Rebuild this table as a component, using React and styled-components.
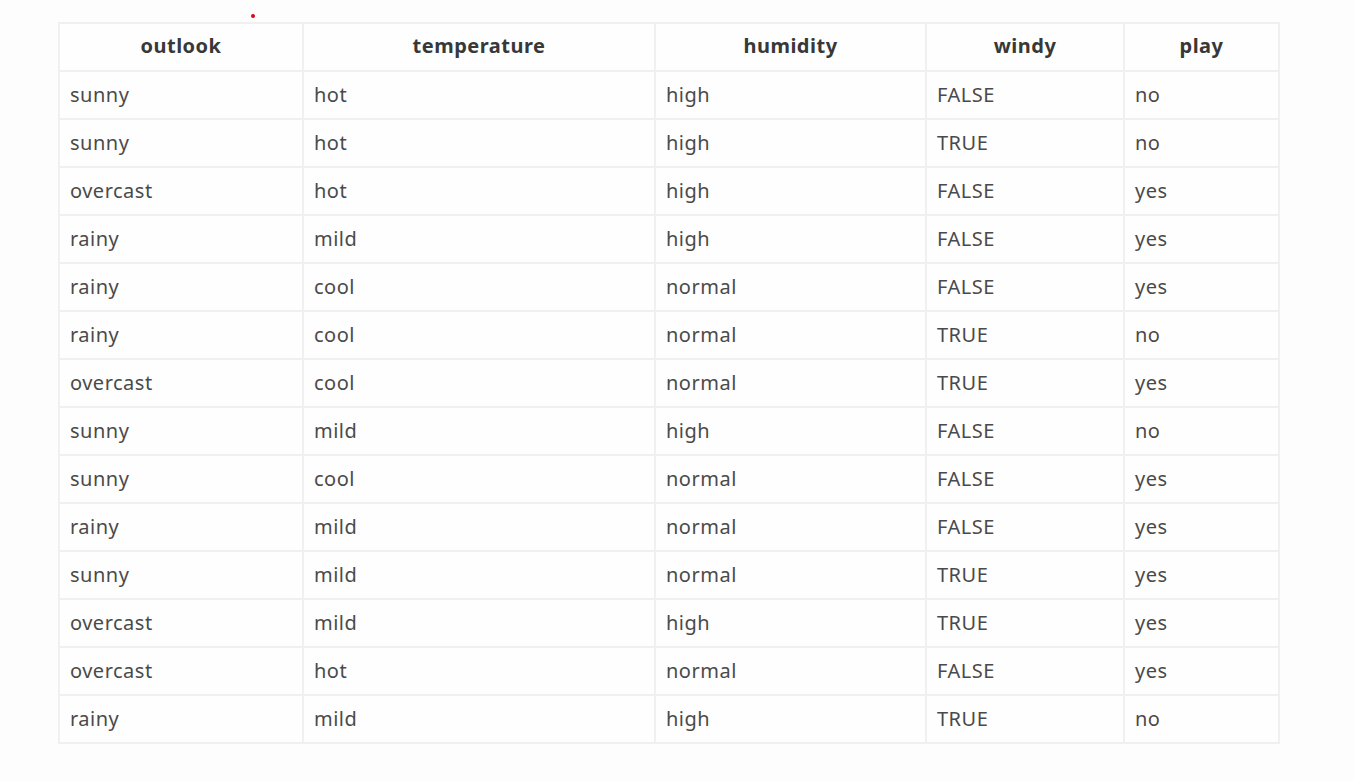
import React from "react";
import styled, { createGlobalStyle } from "styled-components";

const Global = createGlobalStyle`
  html, body { margin: 0; padding: 0; background: #fdfdfd; }
  body { font-family: "Noto Sans", "Open Sans", sans-serif; color: #3a3a3a; }
`;

const Page = styled.div`
  position: relative;
  width: 1354px;
  height: 781px;
  padding: 22px 0 0 58px;
  box-sizing: border-box;
`;

const Dot = styled.span`
  position: absolute;
  left: 251px;
  top: 14px;
  width: 4px;
  height: 4px;
  border-radius: 50%;
  background: #e0001a;
`;

const Table = styled.table`
  border-collapse: collapse;
  table-layout: fixed;
  width: 1220px;
  font-size: 20px;
  letter-spacing: 0.5px;
  background: #fefefe;
`;

const Th = styled.th`
  height: 48px;
  padding: 0 10px 4px;
  box-sizing: border-box;
  border: 2px solid #f0f0f0;
  font-weight: 700;
  text-align: center;
  color: #383838;
`;

const Td = styled.td`
  height: 48px;
  padding: 0 10px 2px;
  box-sizing: border-box;
  border: 2px solid #f0f0f0;
  color: #4a4a4a;
  text-align: left;
`;

const cols = [
  ["outlook", 244],
  ["temperature", 352],
  ["humidity", 271],
  ["windy", 198],
  ["play", 155],
];

const rows = [
  ["sunny", "hot", "high", "FALSE", "no"],
  ["sunny", "hot", "high", "TRUE", "no"],
  ["overcast", "hot", "high", "FALSE", "yes"],
  ["rainy", "mild", "high", "FALSE", "yes"],
  ["rainy", "cool", "normal", "FALSE", "yes"],
  ["rainy", "cool", "normal", "TRUE", "no"],
  ["overcast", "cool", "normal", "TRUE", "yes"],
  ["sunny", "mild", "high", "FALSE", "no"],
  ["sunny", "cool", "normal", "FALSE", "yes"],
  ["rainy", "mild", "normal", "FALSE", "yes"],
  ["sunny", "mild", "normal", "TRUE", "yes"],
  ["overcast", "mild", "high", "TRUE", "yes"],
  ["overcast", "hot", "normal", "FALSE", "yes"],
  ["rainy", "mild", "high", "TRUE", "no"],
];

export default function App() {
  return (
    <Page>
      <Global />
      <Dot />
      <Table>
        <colgroup>
          {cols.map(([n, w]) => (
            <col key={n} style={{ width: w }} />
          ))}
        </colgroup>
        <thead>
          <tr>
            {cols.map(([n]) => (
              <Th key={n}>{n}</Th>
            ))}
          </tr>
        </thead>
        <tbody>
          {rows.map((r, i) => (
            <tr key={i}>
              {r.map((c, j) => (
                <Td key={j}>{c}</Td>
              ))}
            </tr>
          ))}
        </tbody>
      </Table>
    </Page>
  );
}
